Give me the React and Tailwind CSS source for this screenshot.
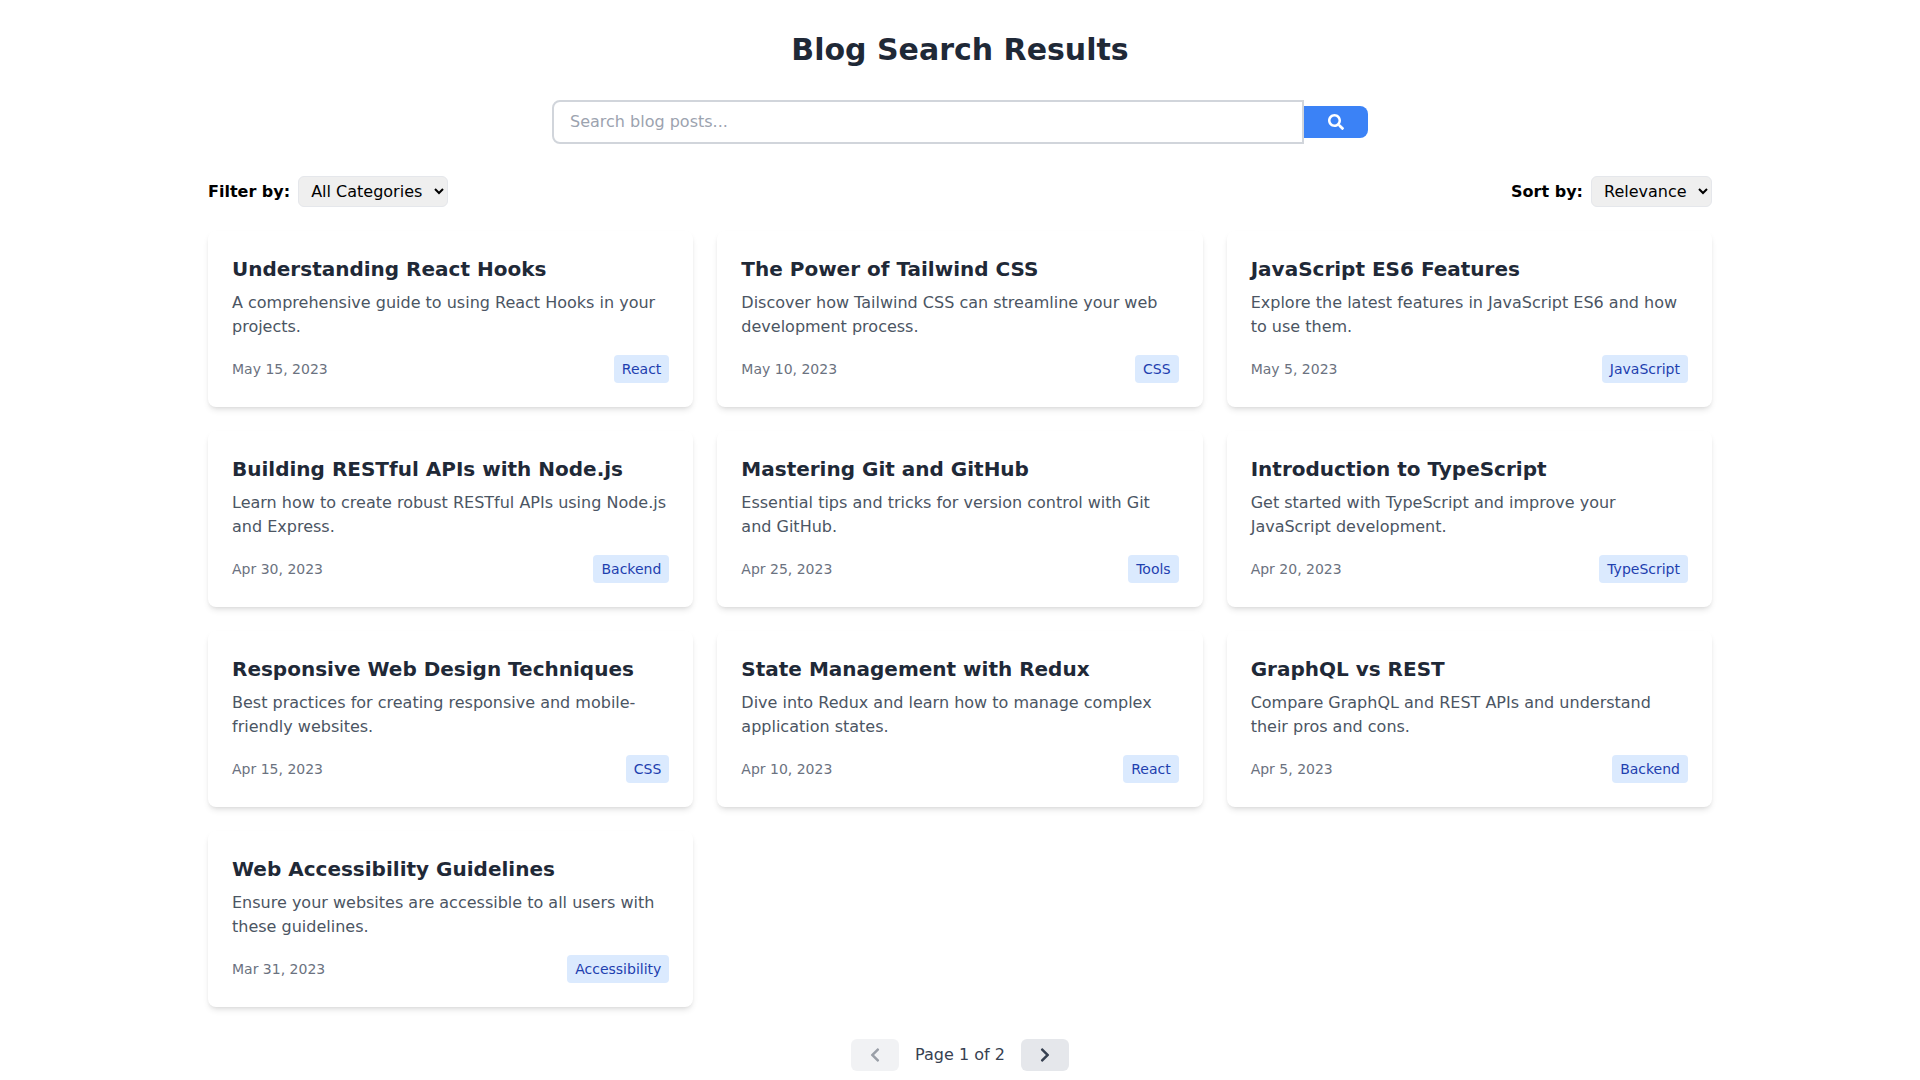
import { useState } from "react";
import { FaSearch, FaChevronLeft, FaChevronRight } from "react-icons/fa";

const posts = [
  { id: 1, title: "Understanding React Hooks", excerpt: "A comprehensive guide to using React Hooks in your projects.", date: "May 15, 2023", category: "React" },
  { id: 2, title: "The Power of Tailwind CSS", excerpt: "Discover how Tailwind CSS can streamline your web development process.", date: "May 10, 2023", category: "CSS" },
  { id: 3, title: "JavaScript ES6 Features", excerpt: "Explore the latest features in JavaScript ES6 and how to use them.", date: "May 5, 2023", category: "JavaScript" },
  { id: 4, title: "Building RESTful APIs with Node.js", excerpt: "Learn how to create robust RESTful APIs using Node.js and Express.", date: "Apr 30, 2023", category: "Backend" },
  { id: 5, title: "Mastering Git and GitHub", excerpt: "Essential tips and tricks for version control with Git and GitHub.", date: "Apr 25, 2023", category: "Tools" },
  { id: 6, title: "Introduction to TypeScript", excerpt: "Get started with TypeScript and improve your JavaScript development.", date: "Apr 20, 2023", category: "TypeScript" },
  { id: 7, title: "Responsive Web Design Techniques", excerpt: "Best practices for creating responsive and mobile-friendly websites.", date: "Apr 15, 2023", category: "CSS" },
  { id: 8, title: "State Management with Redux", excerpt: "Dive into Redux and learn how to manage complex application states.", date: "Apr 10, 2023", category: "React" },
  { id: 9, title: "GraphQL vs REST", excerpt: "Compare GraphQL and REST APIs and understand their pros and cons.", date: "Apr 5, 2023", category: "Backend" },
  { id: 10, title: "Web Accessibility Guidelines", excerpt: "Ensure your websites are accessible to all users with these guidelines.", date: "Mar 31, 2023", category: "Accessibility" },
];

const totalPages = 2;

export default function App() {
  const [query, setQuery] = useState("");
  const [category, setCategory] = useState("All");
  const [sortBy, setSortBy] = useState("relevance");
  const [page, setPage] = useState(1);

  return (
    <div className="max-w-[1536px] mx-auto px-4 py-8 font-['DejaVu_Sans',sans-serif] text-black">
      <h1 className="text-3xl font-bold text-center text-[#1f2937] mb-8">Blog Search Results</h1>

      {/* Search bar */}
      <form onSubmit={(e) => e.preventDefault()} className="flex items-center justify-center mb-8">
        <input
          type="text"
          aria-label="Search blog posts"
          value={query}
          onChange={(e) => setQuery(e.target.value)}
          placeholder="Search blog posts..."
          className="w-full max-w-[752px] px-4 py-2 border-2 border-[#d1d5db] rounded-l-lg placeholder:text-[#9ca3af] focus:outline-none focus:border-[#3b82f6]"
        />
        <button type="submit" aria-label="Search" className="bg-[#3b82f6] text-white px-6 py-2 rounded-r-lg hover:bg-[#2563eb]">
          <FaSearch />
        </button>
      </form>

      {/* Filter and sort */}
      <div className="flex justify-between items-center mb-6">
        <div className="flex items-center">
          <label htmlFor="category" className="mr-2 font-semibold">Filter by:</label>
          <select
            id="category"
            value={category}
            onChange={(e) => setCategory(e.target.value)}
            className="border border-[#e5e7eb] rounded-md px-2 py-1 bg-[#efefef]"
          >
            <option value="All">All Categories</option>
            <option value="React">React</option>
            <option value="CSS">CSS</option>
            <option value="Backend">Backend</option>
          </select>
        </div>
        <div className="flex items-center">
          <label htmlFor="sort" className="mr-2 font-semibold">Sort by:</label>
          <select
            id="sort"
            value={sortBy}
            onChange={(e) => setSortBy(e.target.value)}
            className="border border-[#e5e7eb] rounded-md px-2 py-1 bg-[#efefef]"
          >
            <option value="relevance">Relevance</option>
            <option value="date">Date</option>
          </select>
        </div>
      </div>

      {/* Posts */}
      <div className="grid grid-cols-1 md:grid-cols-2 lg:grid-cols-3 gap-6">
        {posts.map((post) => (
          <div key={post.id} className="bg-white rounded-lg shadow-md p-6">
            <h2 className="text-xl font-semibold text-[#1f2937] mb-2">{post.title}</h2>
            <p className="text-[#4b5563] mb-4">{post.excerpt}</p>
            <div className="flex justify-between items-center">
              <span className="text-sm text-[#6b7280]">{post.date}</span>
              <span className="bg-[#dbeafe] text-[#1e40af] text-sm px-2 py-1 rounded">{post.category}</span>
            </div>
          </div>
        ))}
      </div>

      {/* Pagination */}
      <div className="flex justify-center items-center mt-8">
        <button
          aria-label="Previous page"
          disabled={page === 1}
          onClick={() => setPage(page - 1)}
          className="bg-[#e5e7eb] text-[#374151] px-4 py-2 rounded-md mr-4 disabled:opacity-50"
        >
          <FaChevronLeft />
        </button>
        <span className="text-[#374151]">Page {page} of {totalPages}</span>
        <button
          aria-label="Next page"
          disabled={page === totalPages}
          onClick={() => setPage(page + 1)}
          className="bg-[#e5e7eb] text-[#374151] px-4 py-2 rounded-md ml-4 disabled:opacity-50"
        >
          <FaChevronRight />
        </button>
      </div>
    </div>
  );
}
